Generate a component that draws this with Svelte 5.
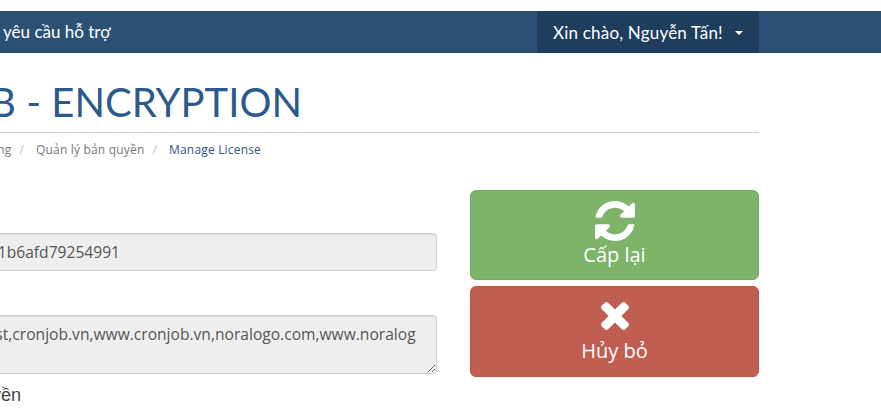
<script>
  let key = "9f3c27d41b6afd79254991";
  let domains = "localhost,cronjob.vn,www.cronjob.vn,noralogo.com,www.noralog";
</script>

<div class="page">
  <div class="wrap">
    <nav class="navbar">
      <a class="nav-link" href="#support">Gửi yêu cầu hỗ trợ</a>
      <div class="user">
        <span>Xin chào, Nguyễn Tấn!</span>
        <span class="caret"></span>
      </div>
    </nav>

    <h1>CRONJOB - ENCRYPTION</h1>

    <ol class="breadcrumb">
      <li>Hệ thống</li>
      <li class="sep">/</li>
      <li>Quản lý bản quyền</li>
      <li class="sep">/</li>
      <li class="active">Manage License</li>
    </ol>

    <div class="columns">
      <div class="form">
        <input class="field key" type="text" readonly value={key} />
        <textarea class="field domains" readonly value={domains}></textarea>
        <div class="label">Bản quyền</div>
      </div>
      <div class="actions">
        <button class="btn green">
          <svg width="40" height="40" viewBox="128 128 1536 1536">
            <path fill="#fff" d="M1639 1056q0 5-1 7-64 268-268 434.5t-478 166.5q-146 0-282.5-55t-243.5-157l-129 129q-19 19-45 19t-45-19-19-45v-448q0-26 19-45t45-19h448q26 0 45 19t19 45-19 45l-137 137q71 66 161 102t187 36q134 0 250-65t186-179q11-17 53-117 8-23 30-23h192q13 0 22.5 9.5t9.5 22.5zm25-800v448q0 26-19 45t-45 19h-448q-26 0-45-19t-19-45 19-45l138-138q-148-137-349-137-134 0-250 65t-186 179q-11 17-53 117-8 23-30 23h-199q-13 0-22.5-9.5t-9.5-22.5v-7q65-268 270-434.5t480-166.5q146 0 284 55.5t245 156.5l130-129q19-19 45-19t45 19 19 45z"/>
          </svg>
          <span>Cấp lại</span>
        </button>
        <button class="btn red">
          <svg width="28" height="28" viewBox="302 366 1188 1188">
            <path fill="#fff" d="M1490 1322q0 40-28 68l-136 136q-28 28-68 28t-68-28l-294-294-294 294q-28 28-68 28t-68-28l-136-136q-28-28-28-68t28-68l294-294-294-294q-28-28-28-68t28-68l136-136q28-28 68-28t68 28l294 294 294-294q28-28 68-28t68 28l136 136q28 28 28 68t-28 68l-294 294 294 294q28 28 28 68z"/>
          </svg>
          <span>Hủy bỏ</span>
        </button>
      </div>
    </div>
  </div>
</div>

<style>
  :global(body) {
    margin: 0;
    background: #fff;
    overflow: hidden;
  }

  .page {
    width: 881px;
    height: 417px;
    overflow: hidden;
  }

  /* the screenshot is scrolled sideways, so the left part hangs off the page */
  .wrap {
    width: 959px;
    margin-left: -200px;
    padding-top: 11px;
  }

  .navbar {
    width: 1081px;
    height: 42px;
    background: #2c5175;
    display: flex;
    align-items: stretch;
    font-family: "Lato", sans-serif;
    font-size: 17px;
    color: #fff;
  }

  .nav-link {
    color: #fff;
    text-decoration: none;
    line-height: 42px;
    margin-left: 172px;
    white-space: nowrap;
  }

  .user {
    margin-left: auto;
    margin-right: 122px;
    width: 222px;
    box-sizing: border-box;
    padding-left: 16px;
    background: #1f3e5e;
    display: flex;
    align-items: center;
    white-space: nowrap;
    letter-spacing: 0.2px;
  }

  .caret {
    width: 0;
    height: 0;
    margin-left: 12px;
    margin-top: 2px;
    border-top: 4px solid #fff;
    border-left: 4px solid transparent;
    border-right: 4px solid transparent;
  }

  h1 {
    margin: 0;
    padding: 23px 0 0 0;
    height: 56px;
    font-family: "Lato", sans-serif;
    font-size: 40px;
    line-height: 52px;
    font-weight: 400;
    color: #2c5a8c;
    text-align: right;
    width: 502px;
    white-space: nowrap;
  }

  .breadcrumb {
    list-style: none;
    margin: 0;
    padding: 8px 0 0 0;
    border-top: 1px solid #ccc;
    display: flex;
    justify-content: flex-end;
    width: 959px;
    box-sizing: border-box;
    font-family: "Open Sans", sans-serif;
    font-size: 12px;
    line-height: 17px;
    letter-spacing: 0.18px;
    color: #777;
  }

  .breadcrumb li {
    white-space: nowrap;
  }

  .breadcrumb .sep {
    color: #bbb;
    margin: 0 12px 0 8px;
  }

  .breadcrumb .active {
    color: #2f5580;
    margin-right: 498px;
  }

  .columns {
    display: grid;
    grid-template-columns: 637px 289px;
    column-gap: 33px;
    margin-top: 32px;
  }

  .form {
    display: flex;
    flex-direction: column;
    padding-top: 43px;
  }

  .field {
    display: block;
    box-sizing: border-box;
    width: 100%;
    background: #eee;
    border: 1px solid #ccc;
    border-radius: 4px;
    box-shadow: inset 0 1px 1px rgba(0, 0, 0, 0.075);
    font-family: "Open Sans", sans-serif;
    font-size: 15.6px;
    color: #555;
    outline: none;
  }

  .key {
    height: 38px;
    padding: 0 12px 0 130px;
  }

  .domains {
    height: 59px;
    margin-top: 44px;
    padding: 8px 20px 6px 142px;
    line-height: 20px;
  }

  .label {
    font-family: "Liberation Sans", sans-serif;
    font-size: 18px;
    line-height: 22px;
    color: #444;
    width: 221px;
    white-space: nowrap;
    text-align: right;
    margin-top: 10px;
  }

  .actions {
    display: flex;
    flex-direction: column;
    gap: 6px;
  }

  .btn {
    box-sizing: border-box;
    width: 100%;
    height: 90px;
    border-radius: 6px;
    border: 1px solid;
    color: #fff;
    font-family: "Open Sans", sans-serif;
    font-size: 20px;
    line-height: 25px;
    display: flex;
    flex-direction: column;
    align-items: center;
    padding: 10px 0 0;
  }

  .btn svg {
    display: block;
    margin-bottom: 1px;
  }

  .green {
    background: #7eb36a;
    border-color: #74ad5f;
  }

  .red {
    background: #c05e52;
    height: 91px;
    border-color: #bf5344;
    padding-top: 15px;
  }

  .red svg {
    margin-bottom: 8px;
  }
</style>
